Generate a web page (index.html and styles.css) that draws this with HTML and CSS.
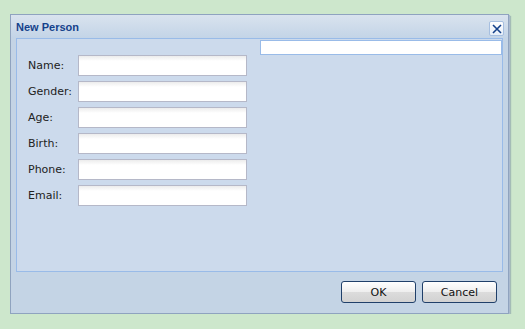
FILE: index.html
```html
<!DOCTYPE html>
<html lang="en">
<head>
    <meta charset="UTF-8">
    <meta name="viewport" content="width=device-width, initial-scale=1.0">
    <title>New Person</title>
    <link rel="stylesheet" href="styles.css">
</head>
<body>
    <div class="window">
        <div class="window-header">
            <span class="window-title">New Person</span>
            <button class="close-btn" title="Close">
                <svg width="10" height="10" viewBox="0 0 10 10">
                    <path d="M1 1 L9 9 M9 1 L1 9" stroke="#15428b" stroke-width="1.6" fill="none"/>
                </svg>
            </button>
        </div>
        <div class="window-body">
            <form class="person-form">
                <div class="form-row">
                    <label for="name">Name:</label>
                    <input type="text" id="name">
                </div>
                <div class="form-row">
                    <label for="gender">Gender:</label>
                    <input type="text" id="gender">
                </div>
                <div class="form-row">
                    <label for="age">Age:</label>
                    <input type="text" id="age">
                </div>
                <div class="form-row">
                    <label for="birth">Birth:</label>
                    <input type="text" id="birth">
                </div>
                <div class="form-row">
                    <label for="phone">Phone:</label>
                    <input type="text" id="phone">
                </div>
                <div class="form-row">
                    <label for="email">Email:</label>
                    <input type="text" id="email">
                </div>
            </form>
            <input type="text" class="side-field">
        </div>
        <div class="window-footer">
            <button class="footer-btn">OK</button>
            <button class="footer-btn">Cancel</button>
        </div>
    </div>
</body>
</html>
```

FILE: styles.css
```css
/* page */
body {
    margin: 0;
    padding: 14px 0 0 10px;
    background: #cde7cc;
    font-family: "DejaVu Sans", Tahoma, sans-serif;
    font-size: 11px;
    color: #222;
}

/* window */
.window {
    width: 499px;
    height: 300px;
    box-sizing: border-box;
    border: 1px solid #8fa3bf;
    background: #c4d4e5;
    box-shadow: 1px 1px 0 #a9b9ce, 2px 2px 1px rgba(90, 110, 140, 0.35);
    display: flex;
    flex-direction: column;
}

.window-header {
    height: 23px;
    display: flex;
    align-items: center;
    justify-content: space-between;
    padding: 0 4px 0 5px;
    background: linear-gradient(#d9e3ee, #c3d4e7);
}

.window-title {
    font-family: "Liberation Sans", Arial, sans-serif;
    font-size: 11px;
    font-weight: bold;
    color: #15428b;
}

.close-btn {
    width: 15px;
    height: 15px;
    padding: 0;
    margin-top: 4px;
    border: 1px solid #a6bfe0;
    border-radius: 2px;
    background: linear-gradient(#ffffff, #e6eef8);
    display: flex;
    align-items: center;
    justify-content: center;
    cursor: pointer;
}

/* body panel */
.window-body {
    height: 234px;
    box-sizing: border-box;
    margin: 0 5px;
    border: 1px solid #99bbe8;
    background: #ccdaec;
    display: flex;
    justify-content: space-between;
    align-items: flex-start;
}

.person-form {
    display: flex;
    flex-direction: column;
    gap: 5px;
    padding: 16px 0 0 11px;
}

.form-row {
    display: flex;
    align-items: center;
}

.form-row label {
    width: 50px;
    font-size: 11px;
    line-height: 13px;
    color: #222;
}

.form-row input {
    width: 169px;
    height: 21px;
    box-sizing: border-box;
    margin: 0;
    border: 1px solid #b5b8c8;
    background: linear-gradient(#ececec, #ffffff 5px);
    padding: 0 3px;
    font-size: 11px;
}

.side-field {
    width: 242px;
    height: 15px;
    box-sizing: border-box;
    margin: 1px 0 0 0;
    border: 1px solid #99bbe8;
    background: #fff;
    padding: 0 3px;
}

/* footer */
.window-footer {
    flex: 1;
    display: flex;
    justify-content: flex-end;
    align-items: flex-start;
    gap: 6px;
    padding: 9px 11px 0 0;
}

.footer-btn {
    width: 75px;
    height: 22px;
    border: 1px solid #20406a;
    border-radius: 3px;
    background: linear-gradient(#ffffff, #eeeeee 50%, #dcdcdc 51%, #d2d2d2);
    font-family: "DejaVu Sans", Tahoma, sans-serif;
    font-size: 11px;
    color: #111;
    cursor: pointer;
    padding: 0;
}
```
